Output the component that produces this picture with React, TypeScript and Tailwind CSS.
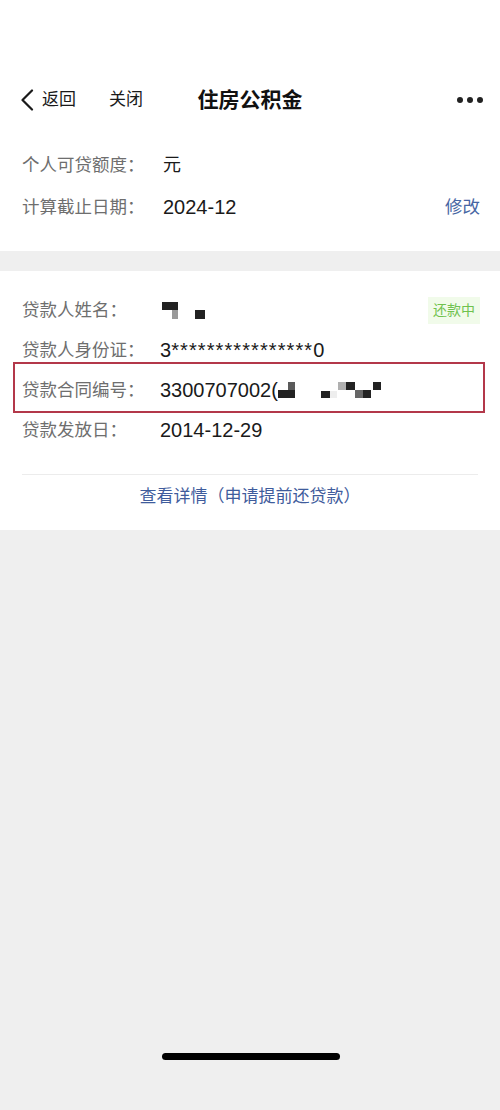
const font = { fontFamily: '"Liberation Sans", "Noto Sans CJK SC", sans-serif' }

// Pixelated blur over private data (name / contract number)
function NameMosaic() {
  return (
    <svg width="48" height="20" viewBox="0 0 48 20" className="block">
      <rect x="2" y="2" width="16" height="8" fill="#222" />
      <rect x="12" y="10" width="6" height="9" fill="#9a9a9a" />
      <rect x="35" y="10" width="10" height="9" fill="#222" />
    </svg>
  )
}

function ContractMosaic() {
  return (
    <svg width="106" height="18" viewBox="0 0 106 18" className="block">
      <rect x="10" y="1" width="7" height="8" fill="#5a5a5a" />
      <rect x="0" y="9" width="17" height="8" fill="#222" />
      <rect x="43" y="10" width="9" height="7" fill="#222" />
      <rect x="52" y="10" width="7" height="7" fill="#eeeeee" />
      <rect x="60" y="1" width="8" height="8" fill="#b0b0b0" />
      <rect x="68" y="1" width="9" height="8" fill="#222" />
      <rect x="77" y="9" width="8" height="8" fill="#666" />
      <rect x="85" y="9" width="8" height="8" fill="#222" />
      <rect x="95" y="1" width="8" height="8" fill="#222" />
    </svg>
  )
}

function Row({
  label,
  children,
  right,
}: {
  label: string
  children?: React.ReactNode
  right?: React.ReactNode
}) {
  return (
    <div className="flex items-center h-10 pl-[22px] pr-[20px]">
      <span className="w-[138px] shrink-0 text-[17.5px] text-[#6e6e6e]">{label}</span>
      <div className="flex-1 flex items-center text-[20px] text-[#1a1a1a]">{children}</div>
      {right}
    </div>
  )
}

export default function App() {
  return (
    <div className="relative min-h-[1110px] w-[500px] bg-[#efefef]" style={font}>
      {/* Top section */}
      <div className="bg-white">
        <div className="h-[76px]" />
        <div className="relative flex items-center h-[48px] px-[20px]">
          <svg width="14" height="22" viewBox="0 0 14 22" className="block">
            <polyline
              points="12,1.5 2.5,11 12,20.5"
              fill="none"
              stroke="#1a1a1a"
              strokeWidth="2.2"
              strokeLinecap="round"
              strokeLinejoin="round"
            />
          </svg>
          <span className="ml-[8px] text-[17px] text-[#1a1a1a]">返回</span>
          <span className="ml-[33px] text-[17px] text-[#1a1a1a]">关闭</span>
          <span className="absolute left-1/2 -translate-x-1/2 text-[21px] font-bold text-[#111]">
            住房公积金
          </span>
          <div className="ml-auto flex items-center gap-[4px] -mr-[3px]">
            <span className="h-[6px] w-[6px] rounded-full bg-[#222]" />
            <span className="h-[6px] w-[6px] rounded-full bg-[#222]" />
            <span className="h-[6px] w-[6px] rounded-full bg-[#222]" />
          </div>
        </div>
        <div className="pt-[20px] pb-[23px]">
          <div className="flex items-center h-[42px] pl-[22px] pr-[20px]">
            <span className="w-[141px] shrink-0 text-[17.5px] text-[#6e6e6e]">个人可贷额度：</span>
            <span className="text-[18px] text-[#1a1a1a]">元</span>
          </div>
          <div className="flex items-center h-[42px] pl-[22px] pr-[20px]">
            <span className="w-[141px] shrink-0 text-[17.5px] text-[#6e6e6e]">计算截止日期：</span>
            <span className="flex-1 text-[20px] text-[#1a1a1a]">2024-12</span>
            <span className="text-[17.5px] text-[#4766a3]">修改</span>
          </div>
        </div>
      </div>

      {/* Loan card */}
      <div className="mt-[20px] bg-white">
        <div className="relative pt-[19px]">
          <Row
            label="贷款人姓名："
            right={
              <span className="px-[5px] py-[3px] bg-[#f1fbea] text-[14px] text-[#6fc24e]">
                还款中
              </span>
            }
          >
            <NameMosaic />
          </Row>
          <Row label="贷款人身份证：">
            3<span className="tracking-[1.1px]">****************</span>0
          </Row>
          <Row label="贷款合同编号：">
            <span>3300707002(</span>
            <ContractMosaic />
          </Row>
          <Row label="贷款发放日：">2014-12-29</Row>

          {/* red annotation box */}
          <div className="absolute left-[13px] top-[91px] w-[472px] h-[51px] border-2 border-[#b3384a]" />
        </div>
        <div className="mx-[22px] mt-[24px] border-t border-[#ececec]" />
        <div className="h-[44px] flex items-center justify-center text-[17px] text-[#3f5c9c]">
          查看详情（申请提前还贷款）
        </div>
        <div className="h-[11px]" />
      </div>

      {/* home indicator */}
      <div className="absolute left-[162px] top-[1053px] h-[7px] w-[178px] rounded-full bg-black" />
    </div>
  )
}
